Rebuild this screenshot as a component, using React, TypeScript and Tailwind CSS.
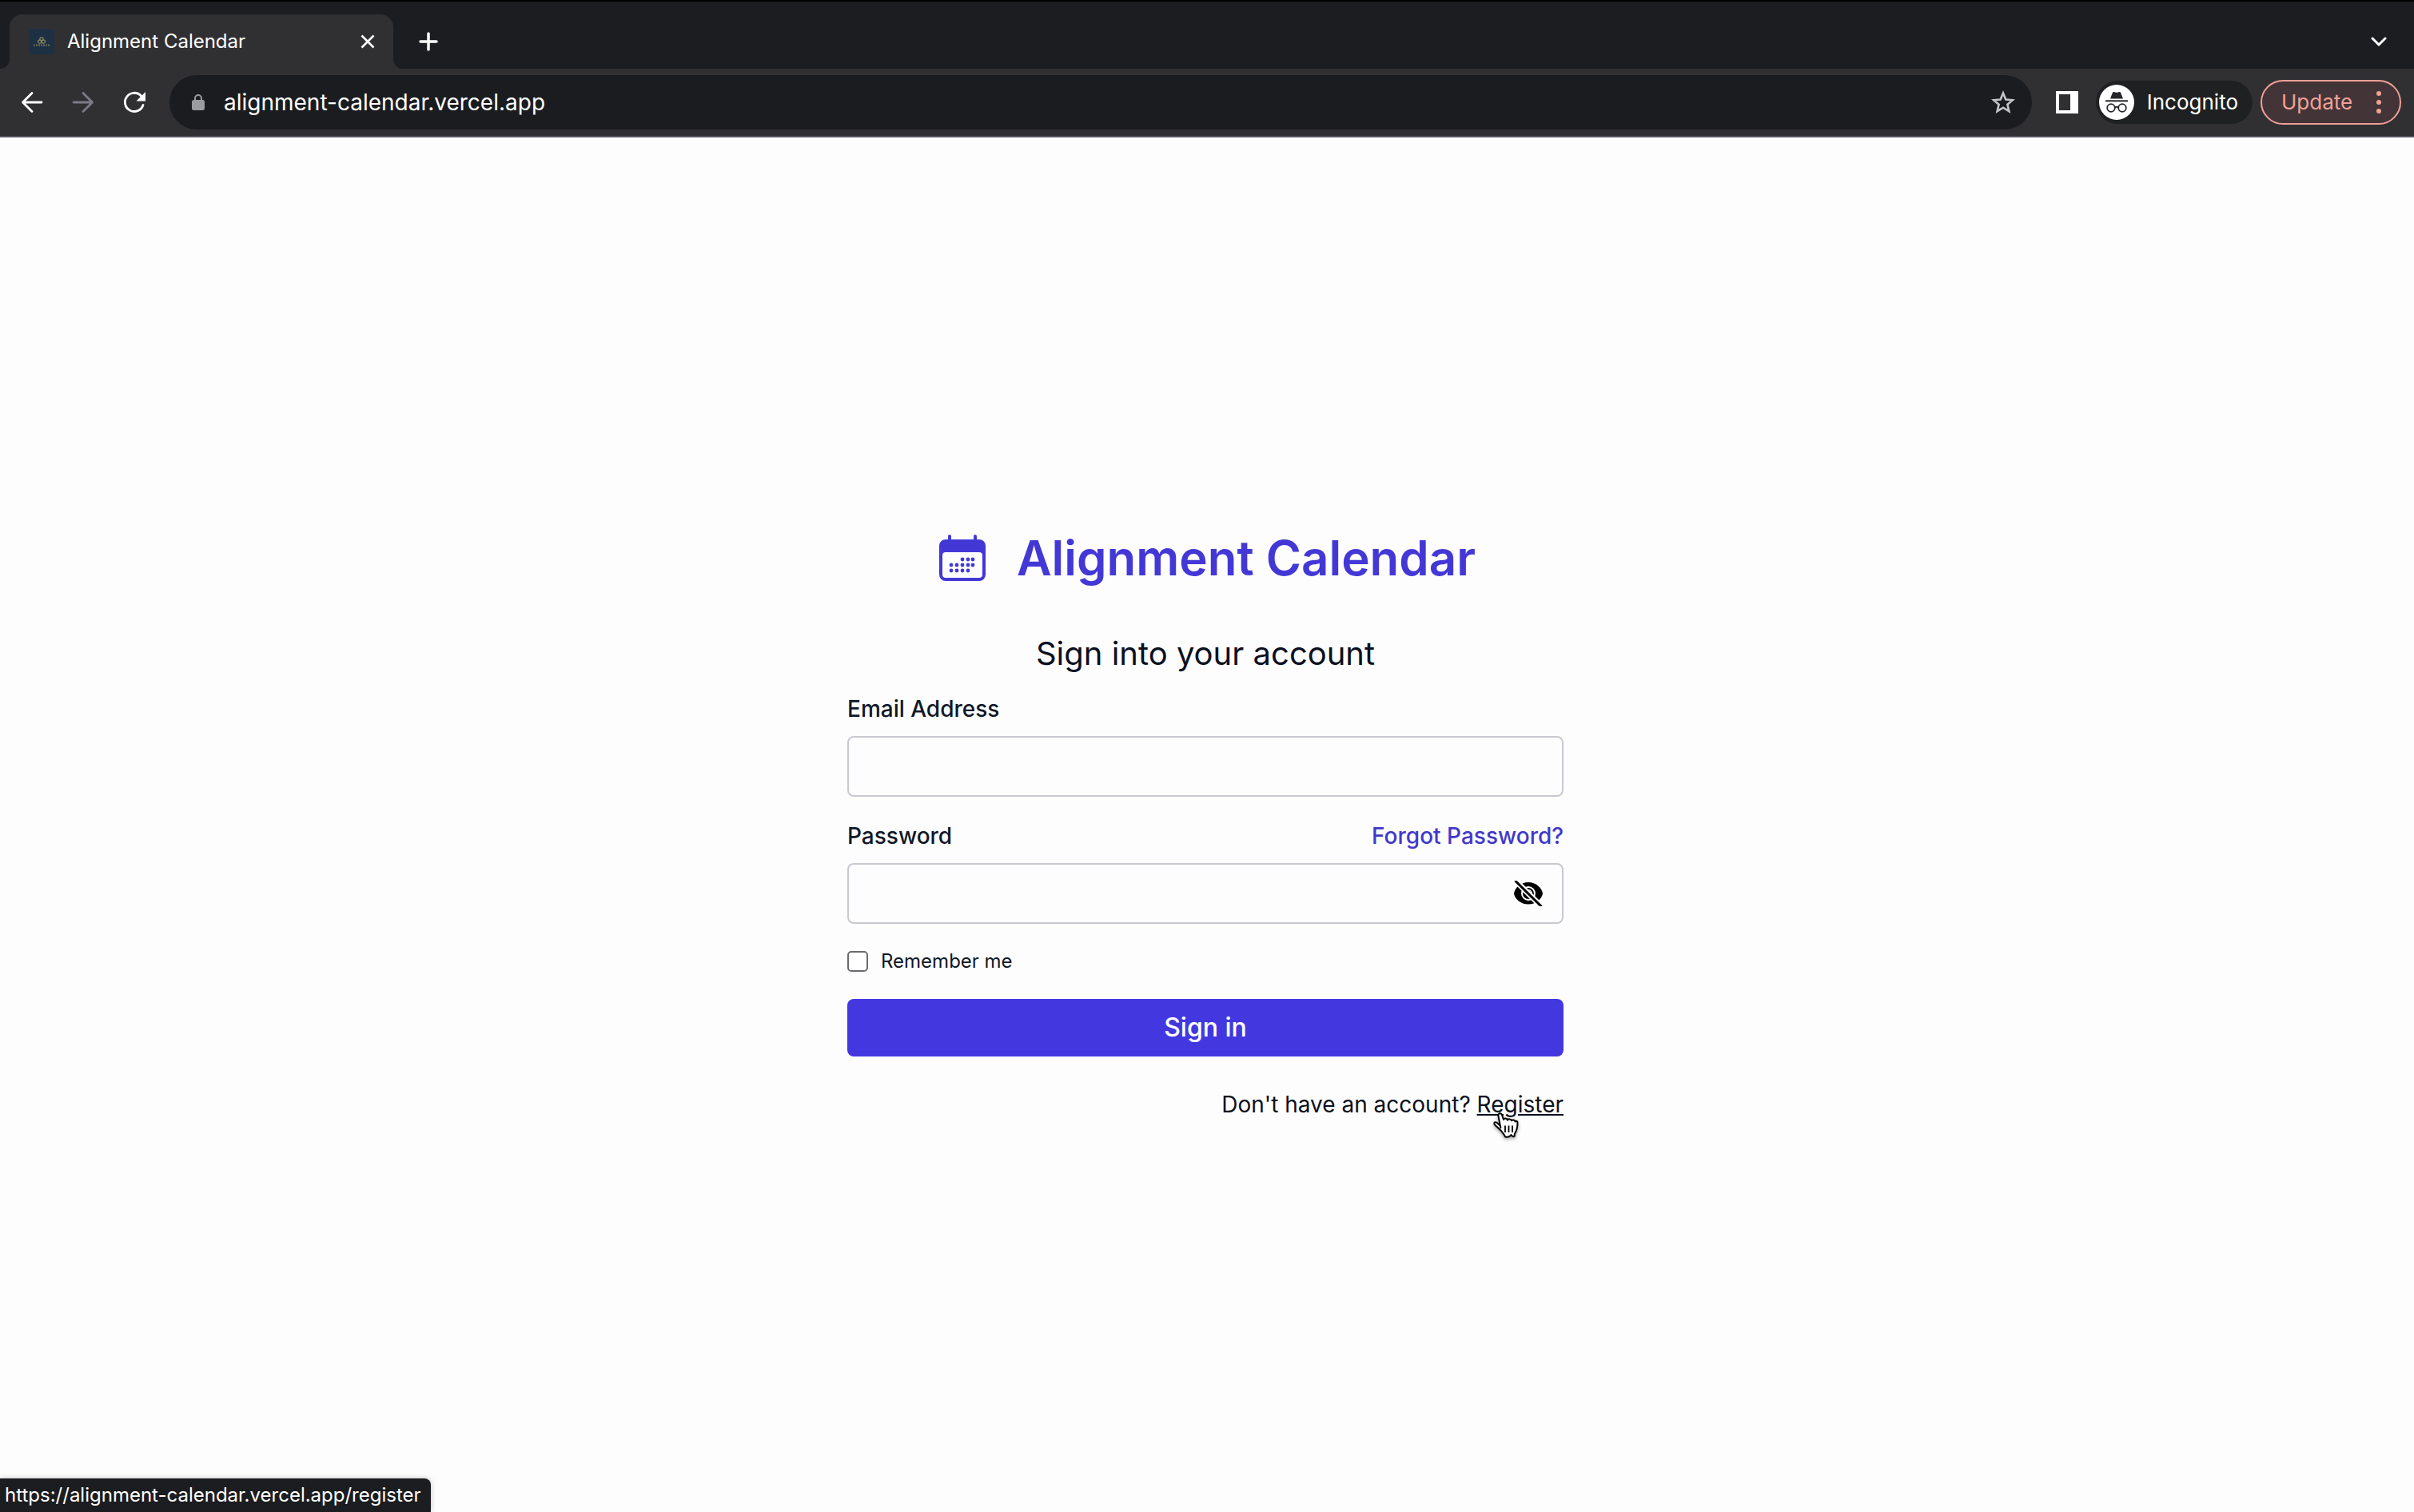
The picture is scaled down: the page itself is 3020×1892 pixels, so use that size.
import * as React from "react";

const calendarDots: [number, number][] = [
  [34, 35], [41, 35], [47, 35],
  [20, 42], [27, 42], [34, 42], [41, 42], [47, 42],
  [20, 49], [27, 49], [34, 49], [41, 49],
];

function CalendarLogo() {
  return (
    <svg className="size-16 shrink-0" viewBox="0 0 64 64" fill="none" aria-hidden="true">
      <path d="M18 5v8M50 5v8" stroke="#4338d6" strokeWidth="4" strokeLinecap="round" />
      <path
        fillRule="evenodd"
        d="M13 9h42a8 8 0 0 1 8 8v36a8 8 0 0 1-8 8H13a8 8 0 0 1-8-8V17a8 8 0 0 1 8-8Zm0 16a4 4 0 0 0-4 4v24a4 4 0 0 0 4 4h42a4 4 0 0 0 4-4V29a4 4 0 0 0-4-4Z"
        fill="#4338d6"
      />
      {calendarDots.map(([x, y]) => (
        <circle key={`${x}-${y}`} cx={x} cy={y - 1} r="2.400" fill="#4338d6" />
      ))}
    </svg>
  );
}

function EyeOffIcon() {
  return (
    <svg className="h-8 w-9" viewBox="0 0 36 32" fill="none" aria-hidden="true">
      <path d="M0 16C1 9 8.500 2 18 2s17 7 18 14c-1 7-8.500 13.500-18 13.500S1 23 0 16Z" fill="#000" />
      <circle cx="18" cy="16" r="8" stroke="#fdfdfd" strokeWidth="2" />
      <path d="M17 12a4 4 0 0 1 5 5" stroke="#fdfdfd" strokeWidth="1.500" />
      <path d="M-1 -3 37 35" stroke="#fdfdfd" strokeWidth="7" />
      <path d="M2.500 1 33.500 31.500" stroke="#000" strokeWidth="3" strokeLinecap="square" />
    </svg>
  );
}

function HandCursor() {
  return (
    <svg
      className="pointer-events-none absolute top-[30px] left-[18px] h-10 w-9 drop-shadow-[0_2px_2px_rgba(0,0,0,0.35)]"
      viewBox="0 0 36 40"
      fill="none"
      aria-hidden="true"
    >
      <path
        d="M11.500 24 8.500 8.500C7.800 5.500 11 4 12.800 6.500L15 13c.5-2 4.500-2 5 .7.800-2 4.500-1.700 5 .6 1-1.500 4.300-1 4.500 1.200 1.200-1.300 3-.5 3 1.500 0 5.500-.500 9.500-3.500 13.500l-.500 3.500c-1.500.6-2.500.3-4-2-1.500 2.500-3.500 3.300-7.500 2.500-1-3-3.500-5-5.500-8L4 19.500C2 16.500 5 15 7.500 17.500l3 3"
        fill="#fff"
        stroke="#000"
        strokeWidth="2"
        strokeLinejoin="round"
      />
      <path d="M17 20.500v8.500M21.500 20.500v8.500M26 20.500v8.500" stroke="#000" strokeWidth="1.800" />
    </svg>
  );
}

function TabStrip() {
  return (
    <div className="flex h-[86px] items-end border-t-2 border-black bg-[#1c1d20] pr-5 pl-3">
      <div className="relative flex h-[68px] w-[480px] items-center rounded-t-2xl bg-[#303033] pr-5 pl-6">
        <svg className="absolute bottom-0 -left-3 size-3" viewBox="0 0 12 12" aria-hidden="true">
          <path d="M12 0v12H0A12 12 0 0 0 12 0Z" fill="#303033" />
        </svg>
        <svg className="absolute -right-3 bottom-0 size-3" viewBox="0 0 12 12" aria-hidden="true">
          <path d="M0 0v12h12A12 12 0 0 1 0 0Z" fill="#303033" />
        </svg>
        <svg className="size-8 shrink-0" viewBox="0 0 32 32" fill="none" aria-hidden="true">
          <path d="M0 0h32v32H0z" fill="#1e3044" />
          <circle cx="16" cy="13" r="2.200" stroke="#86865c" strokeWidth="1.200" />
          <circle cx="13.800" cy="16" r="2.200" stroke="#86865c" strokeWidth="1.200" />
          <circle cx="18.200" cy="16" r="2.200" stroke="#86865c" strokeWidth="1.200" />
          <path d="M6 20.500h20" stroke="#6d7058" strokeWidth="2" strokeDasharray="2 1" />
        </svg>
        <span className="ml-4 flex-1 truncate text-[24px] leading-8 text-white">Alignment Calendar</span>
        <button type="button" aria-label="Close tab" className="flex size-6 items-center justify-center">
          <svg className="size-[18px]" viewBox="0 0 18 18" fill="none" stroke="#fff" strokeWidth="2.600" aria-hidden="true">
            <path d="m1.500 1.500 15 15m0-15-15 15" />
          </svg>
        </button>
      </div>
      <button type="button" aria-label="New tab" className="ml-7 flex h-[68px] w-8 items-center justify-center">
        <svg className="size-6" viewBox="0 0 24 24" stroke="#fff" strokeWidth="3.500" strokeLinecap="round" aria-hidden="true">
          <path d="M12 2v20M2 12h20" />
        </svg>
      </button>
      <button type="button" aria-label="Search tabs" className="ml-auto flex h-[68px] w-12 items-center justify-center">
        <svg className="size-5" viewBox="0 0 20 20" fill="none" stroke="#fff" strokeWidth="3" strokeLinecap="round" strokeLinejoin="round" aria-hidden="true">
          <path d="m2 6 8 8 8-8" />
        </svg>
      </button>
    </div>
  );
}

function Toolbar() {
  return (
    <div className="flex h-[86px] items-center border-b-2 border-[#55545c] bg-[#303033] px-4">
      <nav className="flex gap-4" aria-label="History">
        <button type="button" aria-label="Back" className="flex size-12 items-center justify-center">
          <svg className="size-7" viewBox="0 0 28 28" fill="none" stroke="#fff" strokeWidth="2.800" strokeLinecap="round" strokeLinejoin="round" aria-hidden="true">
            <path d="M26 14H2.500M14 2.500 2.500 14 14 25.500" />
          </svg>
        </button>
        <button type="button" aria-label="Forward" className="flex size-12 items-center justify-center">
          <svg className="size-7" viewBox="0 0 28 28" fill="none" stroke="#7d7b88" strokeWidth="2.800" strokeLinecap="round" strokeLinejoin="round" aria-hidden="true">
            <path d="M2 14h23.500M14 2.500 25.500 14 14 25.500" />
          </svg>
        </button>
        <button type="button" aria-label="Reload" className="flex size-12 items-center justify-center">
          <svg className="size-7" viewBox="0 0 28 28" fill="none" aria-hidden="true">
            <path d="M25 17.500A11.600 11.600 0 1 1 22.500 6" stroke="#fff" strokeWidth="2.800" strokeLinecap="round" />
            <path d="M28 1v11.500H16.500Z" fill="#fff" />
          </svg>
        </button>
      </nav>
      <div className="ml-5 flex h-[68px] flex-1 items-center rounded-full bg-[#1b1c1f] pr-5 pl-7">
        <svg className="h-6 w-4 shrink-0" viewBox="0 0 16 24" fill="none" aria-hidden="true">
          <path d="M4 11V7a4 4 0 0 1 8 0v4" stroke="#9a9ca0" strokeWidth="2" />
          <rect y="9" width="16" height="13" rx="2.500" fill="#9a9ca0" />
        </svg>
        <input
          type="text"
          aria-label="Address"
          defaultValue="alignment-calendar.vercel.app"
          className="ml-6 min-w-0 flex-1 bg-transparent text-[28px] leading-9 text-white outline-none"
        />
        <button type="button" aria-label="Bookmark this page" className="flex size-8 items-center justify-center">
          <svg className="size-[30px]" viewBox="0 0 30 30" fill="none" stroke="#c3c3c8" strokeWidth="2.600" aria-hidden="true">
            <path d="m15 3.500 3.300 8 8.700.7-6.600 5.600 2 8.400-7.400-4.500-7.400 4.500 2-8.400L3 12.200l8.700-.7Z" />
          </svg>
        </button>
      </div>
      <button type="button" aria-label="Side panel" className="ml-5 flex size-12 items-center justify-center">
        <svg className="size-7" viewBox="0 0 28 28" aria-hidden="true">
          <path fillRule="evenodd" d="M0 0h28v28H0ZM4 4v20h14V4Z" fill="#fff" />
        </svg>
      </button>
      <button type="button" className="ml-3 flex h-[54px] items-center rounded-full bg-[#1f2022] pr-[18px] pl-1 text-[26px] leading-8 text-white">
        <svg className="size-11" viewBox="0 0 44 44" fill="none" aria-hidden="true">
          <circle cx="22" cy="22" r="22" fill="#fff" />
          <path d="M14 17.500 17 9.800c.3-.8.900-1 1.600-.7 2.200.8 4.600.8 6.800 0 .7-.3 1.300-.1 1.600.7l3 7.700Z" fill="#26262a" />
          <path d="M8 20.300h28" stroke="#26262a" strokeWidth="2" />
          <circle cx="15" cy="29" r="4.800" stroke="#26262a" strokeWidth="1.800" />
          <circle cx="29" cy="29" r="4.800" stroke="#26262a" strokeWidth="1.800" />
          <path d="M19.500 28.500q2.500-1.500 5 0" stroke="#26262a" strokeWidth="1.800" />
        </svg>
        <span className="ml-4">Incognito</span>
      </button>
      <button type="button" className="ml-2.5 flex h-14 w-44 items-center justify-between rounded-full border-2 border-[#f0a096] bg-[#433438] pr-5 pl-6 text-[26px] leading-8 text-[#f2a196]">
        Update
        <svg className="h-8 w-3" viewBox="0 0 12 32" fill="#f2a196" aria-hidden="true">
          <circle cx="6" cy="5" r="3" />
          <circle cx="6" cy="16" r="3" />
          <circle cx="6" cy="27" r="3" />
        </svg>
      </button>
    </div>
  );
}

function SignInForm() {
  return (
    <div className="w-full max-w-[896px]">
      <div className="flex items-center justify-center gap-[38px]">
        <CalendarLogo />
        <h1 className="text-[60px] leading-[72px] font-semibold text-[#4338d6]">Alignment Calendar</h1>
      </div>
      <h2 className="mt-14 text-center text-[40px] leading-[56px] text-[#0b1020]">Sign into your account</h2>
      <form className="mt-5 flex flex-col" onSubmit={(event) => event.preventDefault()}>
        <label htmlFor="email" className="mb-[13px] text-[28px] leading-[42px] font-medium text-[#111827]">
          Email Address
        </label>
        <input id="email" type="email" className="h-[76px] rounded-lg border-2 border-[#c8c9d0] bg-transparent px-4 text-[28px]" />
        <div className="mt-7 mb-[13px] flex justify-between text-[28px] leading-[42px] font-medium">
          <label htmlFor="password" className="text-[#111827]">Password</label>
          <a href="#forgot" className="text-[#4338ca]">Forgot Password?</a>
        </div>
        <div className="flex h-[76px] items-center rounded-lg border-2 border-[#c8c9d0] pr-6">
          <input id="password" type="password" className="h-full min-w-0 flex-1 bg-transparent px-4 text-[28px] outline-none" />
          <button type="button" aria-label="Show password">
            <EyeOffIcon />
          </button>
        </div>
        <div className="mt-7 flex h-[38px] items-center">
          <input id="remember" type="checkbox" className="size-[26px] appearance-none rounded-[5px] border-2 border-[#6b6b70] bg-white" />
          <label htmlFor="remember" className="ml-4 text-[24px] leading-8 text-[#111827]">Remember me</label>
        </div>
        <button type="submit" className="mt-7 h-[72px] rounded-lg bg-[#4338df] text-[32px] leading-10 font-medium text-white">
          Sign in
        </button>
      </form>
      <p className="mt-9 text-right text-[28px] leading-[48px] text-[#0b1020]">
        Don't have an account?{" "}
        <a href="#register" className="relative inline-block underline">
          Register
          <HandCursor />
        </a>
      </p>
    </div>
  );
}

export default function App() {
  return (
    <div className="relative flex min-h-screen flex-col bg-[#fdfdfd] font-['Inter',sans-serif]">
      <header>
        <TabStrip />
        <Toolbar />
      </header>
      <main className="flex flex-1 items-center justify-center pt-[3px] pr-1">
        <SignInForm />
      </main>
      <div className="absolute bottom-0 left-0 flex h-[42px] items-center rounded-tr-lg bg-[#1c1d20] pr-3 pl-1.5 text-[24px] leading-8 text-white shadow-[0_0_6px_rgba(0,0,0,0.25)]">
        https://alignment-calendar.vercel.app/register
      </div>
    </div>
  );
}
